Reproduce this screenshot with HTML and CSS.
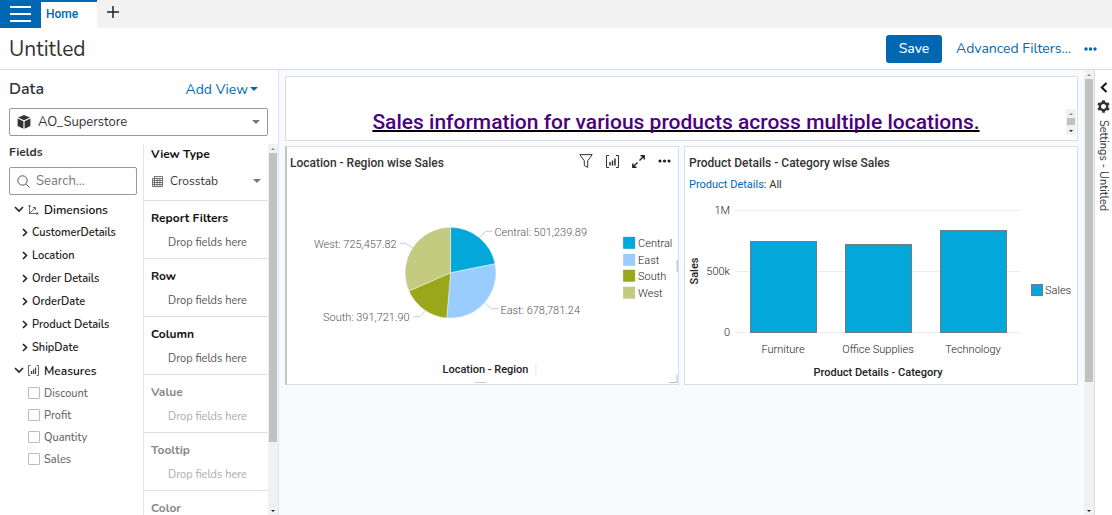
FILE: index.html
```html
<!DOCTYPE html>
<html lang="en">
<head>
    <meta charset="UTF-8">
    <meta name="viewport" content="width=device-width, initial-scale=1.0">
    <title>Untitled</title>
    <link rel="stylesheet" href="styles.css">
</head>
<body>
    <nav class="tabbar">
        <button class="menu-btn" aria-label="Menu"><span></span><span></span><span></span></button>
        <a class="tab" href="#">Home</a>
        <button class="new-tab" aria-label="New tab">
            <svg width="12" height="12" viewBox="0 0 12 12"><path d="M6 0v12M0 6h12" stroke="#222" stroke-width="1.5"/></svg>
        </button>
    </nav>

    <header class="header">
        <h1>Untitled</h1>
        <button class="save">Save</button>
        <a class="adv" href="#">Advanced Filters...</a>
        <button class="more" aria-label="More">
            <svg width="13" height="4" viewBox="0 0 13 4" fill="#0067b3"><circle cx="2" cy="2" r="1.7"/><circle cx="6.5" cy="2" r="1.7"/><circle cx="11" cy="2" r="1.7"/></svg>
        </button>
    </header>

    <div class="workspace">
        <aside class="data">
            <div class="data-head">
                <h2>Data</h2>
                <button class="add-view">Add View <i class="caret blue"></i></button>
            </div>
            <div class="dataset">
                <svg width="14" height="14" viewBox="0 0 14 14" fill="#333"><path d="M7 0l6 2.6-6 2.7-6-2.7zM.6 3.6l5.8 2.6v7.6L.6 11zM13.4 3.6L7.6 6.2v7.6l5.8-2.8z"/></svg>
                <select aria-label="Data set"><option>AO_Superstore</option></select>
                <i class="caret"></i>
            </div>
            <div class="columns">
                <section class="fields">
                    <h3>Fields</h3>
                    <div class="search">
                        <svg width="13" height="13" viewBox="0 0 13 13" fill="none" stroke="#555"><circle cx="5.5" cy="5.5" r="4.7"/><path d="M9 9l3.6 3.6"/></svg>
                        <input type="text" placeholder="Search..." aria-label="Search fields">
                    </div>
                    <ul class="tree">
                        <li class="group">
                            <svg width="10" height="7" viewBox="0 0 10 7" class="chev"><path d="M1 1l4 4 4-4"/></svg>
                            <svg width="11" height="11" viewBox="0 0 11 11" fill="none" stroke="#444"><path d="M1.5 1v8.5H10M1.5 9.5L7 4M0 2.5L1.5 1 3 2.5M8.5 8L10 9.5 8.5 11M4.8 3.5H7.5V6" stroke-width=".8"/></svg>
                            <b>Dimensions</b>
                        </li>
                        <li><svg width="6" height="9" viewBox="0 0 6 9" class="chev"><path d="M1 1l3.5 3.5L1 8"/></svg>CustomerDetails</li>
                        <li><svg width="6" height="9" viewBox="0 0 6 9" class="chev"><path d="M1 1l3.5 3.5L1 8"/></svg>Location</li>
                        <li><svg width="6" height="9" viewBox="0 0 6 9" class="chev"><path d="M1 1l3.5 3.5L1 8"/></svg>Order Details</li>
                        <li><svg width="6" height="9" viewBox="0 0 6 9" class="chev"><path d="M1 1l3.5 3.5L1 8"/></svg>OrderDate</li>
                        <li><svg width="6" height="9" viewBox="0 0 6 9" class="chev"><path d="M1 1l3.5 3.5L1 8"/></svg>Product Details</li>
                        <li><svg width="6" height="9" viewBox="0 0 6 9" class="chev"><path d="M1 1l3.5 3.5L1 8"/></svg>ShipDate</li>
                        <li class="group">
                            <svg width="10" height="7" viewBox="0 0 10 7" class="chev"><path d="M1 1l4 4 4-4"/></svg>
                            <svg width="11" height="11" viewBox="0 0 11 11" fill="none" stroke="#444"><path d="M2.5 .5h-2v10h2M8.5 .5h2v10h-2" stroke-width=".8"/><path d="M3.5 9V6M5.5 9V4.5M7.5 9V2.5" stroke-width="1.3"/></svg>
                            <b>Measures</b>
                        </li>
                        <li class="measure"><label><input type="checkbox">Discount</label></li>
                        <li class="measure"><label><input type="checkbox">Profit</label></li>
                        <li class="measure"><label><input type="checkbox">Quantity</label></li>
                        <li class="measure"><label><input type="checkbox">Sales</label></li>
                    </ul>
                </section>
                <section class="shelves">
                    <div class="shelf">
                        <h4>View Type</h4>
                        <div class="view-type">
                            <svg width="11" height="11" viewBox="0 0 11 11" fill="none" stroke="#555" stroke-width=".8"><path d="M2.5 .5h8v10h-10v-8h2zM2.5 .5v10M.5 4.5h10M.5 6.5h10M.5 8.5h10M5.2 2.5v8M7.9 2.5v8M2.5 2.5h8"/></svg>
                            <select aria-label="View type"><option>Crosstab</option></select>
                            <i class="caret"></i>
                        </div>
                    </div>
                    <div class="shelf"><h4>Report Filters</h4><p>Drop fields here</p></div>
                    <div class="shelf"><h4>Row</h4><p>Drop fields here</p></div>
                    <div class="shelf"><h4>Column</h4><p>Drop fields here</p></div>
                    <div class="shelf off"><h4>Value</h4><p>Drop fields here</p></div>
                    <div class="shelf off"><h4>Tooltip</h4><p>Drop fields here</p></div>
                    <div class="shelf off"><h4>Color</h4></div>
                </section>
                <div class="scrollbar"><i class="up"></i><div class="thumb side-thumb"></div><i class="down"></i></div>
            </div>
        </aside>

        <main class="board">
            <div class="cards">
                <div class="card banner">
                    <a href="#">Sales information for various products across multiple locations.</a>
                    <div class="scrollbar"><i class="up"></i><div class="thumb"></div><i class="down"></i></div>
                </div>

                <div class="card active">
                    <div class="card-head">
                        <h5>Location - Region wise Sales</h5>
                        <div class="tools">
                            <button aria-label="Filter"><svg width="14" height="14" viewBox="0 0 14 14" fill="none" stroke="#333"><path d="M.8 .6h12.4L8.7 6.8v6.6L5.3 11.5V6.8z"/></svg></button>
                            <button aria-label="Chart type"><svg width="13" height="13" viewBox="0 0 13 13" fill="none" stroke="#333"><path d="M3 .5H.5v12H3M10 .5h2.5v12H10"/><path d="M4 10.5V7M6.5 10.5V5.5M9 10.5V3.5" stroke-width="1.5"/></svg></button>
                            <button aria-label="Expand"><svg width="13" height="13" viewBox="0 0 13 13" fill="none" stroke="#222" stroke-width="1.4"><path d="M7.5 5.5L12 1M8.5 .8h3.7v3.7M5.5 7.5L1 12M.8 8.5v3.7h3.7"/></svg></button>
                            <button aria-label="More"><svg width="13" height="4" viewBox="0 0 13 4" fill="#222"><circle cx="2" cy="2" r="1.6"/><circle cx="6.5" cy="2" r="1.6"/><circle cx="11" cy="2" r="1.6"/></svg></button>
                        </div>
                    </div>
                    <svg class="chart" viewBox="0 0 392 206">
                        <g stroke="#fff" stroke-width=".4">
                            <path fill="#04a7da" d="M164 95V49.5A45.5 45.5 0 0 1 208.6 86z"/>
                            <path fill="#99ccff" d="M164 95L208.6 86A45.5 45.5 0 0 1 160.1 140.3z"/>
                            <path fill="#9aa71a" d="M164 95L160.1 140.3A45.5 45.5 0 0 1 122.3 113.3z"/>
                            <path fill="#c3cb80" d="M164 95L122.3 113.3A45.5 45.5 0 0 1 164 49.5z"/>
                        </g>
                        <path d="M193 60l6-6.5h7M198 125l7 6h7M139 133l-6 6h-6M126 70l-7-4.5h-6" fill="none" stroke="#ccc"/>
                        <g class="light">
                            <text x="208" y="58">Central: 501,239.89</text>
                            <text x="214" y="136">East: 678,781.24</text>
                            <text x="123" y="143" text-anchor="end">South: 391,721.90</text>
                            <text x="110" y="70" text-anchor="end">West: 725,457.82</text>
                        </g>
                        <rect x="337" y="59" width="12" height="12" fill="#04a7da"/>
                        <rect x="337" y="76" width="12" height="12" fill="#99ccff"/>
                        <rect x="337" y="92" width="12" height="12" fill="#9aa71a"/>
                        <rect x="337" y="109" width="12" height="12" fill="#c3cb80"/>
                        <g class="label">
                            <text x="352" y="69">Central</text>
                            <text x="352" y="86">East</text>
                            <text x="352" y="102">South</text>
                            <text x="352" y="119">West</text>
                        </g>
                        <text class="axis" x="199" y="196" text-anchor="middle">Location - Region</text>
                        <path d="M249.5 186v13" stroke="#e5e5e5"/>
                        <path d="M188 205.5h12M391.5 82v12" stroke="#ccc" stroke-width="2"/>
                        <path d="M391 197v8h-8" fill="none" stroke="#bbb"/>
                    </svg>
                </div>

                <div class="card">
                    <div class="card-head"><h5>Product Details - Category wise Sales</h5></div>
                    <div class="crumb"><a href="#">Product Details</a>: All</div>
                    <svg class="chart" viewBox="0 0 392 189">
                        <path d="M50 15.5h285M50 76.5h285M50 137.5h285" stroke="#ececec"/>
                        <g fill="#04a7da" stroke="#6f7d82">
                            <rect x="65.5" y="46.5" width="66" height="91"/>
                            <rect x="160.5" y="49.5" width="66" height="88"/>
                            <rect x="255.5" y="35.5" width="66" height="102"/>
                            <rect x="346.5" y="89.5" width="11" height="11"/>
                        </g>
                        <g class="label" text-anchor="end">
                            <text x="45" y="19">1M</text>
                            <text x="45" y="80">500k</text>
                            <text x="45" y="141">0</text>
                        </g>
                        <g class="label" text-anchor="middle">
                            <text x="98" y="158">Furniture</text>
                            <text x="193" y="158">Office Supplies</text>
                            <text x="288" y="158">Technology</text>
                        </g>
                        <text class="label" x="360" y="99">Sales</text>
                        <text class="axis" x="193" y="181" text-anchor="middle">Product Details - Category</text>
                        <text class="axis" transform="translate(13 76) rotate(-90)" text-anchor="middle">Sales</text>
                    </svg>
                </div>
            </div>
            <div class="scrollbar"><i class="up"></i><div class="thumb board-thumb"></div><i class="down"></i></div>
        </main>

        <aside class="settings">
            <button aria-label="Open settings"><svg width="8" height="11" viewBox="0 0 8 11" fill="none" stroke="#111" stroke-width="2"><path d="M6.5 1L1.8 5.5 6.5 10"/></svg></button>
            <svg width="13" height="13" viewBox="-7 -7 14 14"><circle r="4" fill="none" stroke="#333" stroke-width="2.6"/><path d="M0-6.8V-4M0 4v2.8M5.9-3.4L3.5-2M-3.5 2l-2.4 1.4M5.9 3.4L3.5 2M-3.5-2l-2.4-1.4" stroke="#333" stroke-width="3"/></svg>
            <span>Settings - Untitled</span>
        </aside>
    </div>
</body>
</html>
```

FILE: styles.css
```css
* {
    box-sizing: border-box;
}
body {
    margin: 0;
    height: 100vh;
    display: flex;
    flex-direction: column;
    overflow: hidden;
    font-family: Nunito, Lato, sans-serif;
    font-size: 13px;
    color: #333;
    background: #fff;
}
h1, h2, h3, h4, h5, p, ul {
    margin: 0;
    padding: 0;
}
button {
    border: 0;
    padding: 0;
    background: none;
    font-family: inherit;
    color: inherit;
    display: flex;
    align-items: center;
    justify-content: center;
}
a {
    color: #0067b3;
    text-decoration: none;
}
svg {
    flex: none;
}

/* top tabs */
.tabbar {
    flex: none;
    display: flex;
    height: 28px;
    background: #f2f2f2;
}
.menu-btn {
    width: 41px;
    flex-direction: column;
    gap: 5px;
    background: #0067b3;
}
.menu-btn span {
    width: 21px;
    height: 2px;
    background: #fff;
}
.tab {
    width: 56px;
    padding-left: 5px;
    border-top: 2px solid #0067b3;
    background: #fff;
    font-family: Roboto, sans-serif;
    font-size: 12px;
    font-weight: 500;
    line-height: 24px;
}
.new-tab {
    width: 32px;
    height: 24px;
}

/* report header */
.header {
    flex: none;
    display: flex;
    align-items: center;
    height: 42px;
    padding: 0 15px 0 9px;
    border-bottom: 1px solid #d5dbe8;
}
.header h1 {
    flex: 1;
    font-size: 21px;
    font-weight: 400;
}
.save {
    width: 56px;
    height: 28px;
    margin-right: 14px;
    border-radius: 3px;
    background: #0067b3;
    color: #fff;
    font-size: 14px;
    font-weight: 500;
}
.adv {
    margin-right: 13px;
    font-size: 14px;
}

.workspace {
    flex: 1;
    display: flex;
    min-height: 0;
}

/* data panel */
.data {
    flex: none;
    display: flex;
    flex-direction: column;
    width: 279px;
    border-right: 1px solid #dfe4ee;
}
.data-head {
    display: flex;
    justify-content: space-between;
    align-items: center;
    height: 38px;
    padding: 0 20px 0 9px;
}
.data-head h2 {
    font-size: 16px;
    font-weight: 600;
}
.add-view {
    gap: 2px;
    color: #0067b3;
    font-size: 14px;
}
.caret {
    border: 4px solid transparent;
    border-top: 4px solid #777;
    border-bottom: 0;
}
.caret.blue {
    border-top-color: #0067b3;
}
.dataset {
    display: flex;
    align-items: center;
    gap: 7px;
    height: 28px;
    margin: 0 10px 0 9px;
    padding: 0 7px;
    border: 1px solid #999;
    border-radius: 2px;
}
select {
    flex: 1;
    min-width: 0;
    border: 0;
    padding: 0;
    appearance: none;
    background: none;
    color: #333;
    font-family: inherit;
    font-size: 13px;
}
.columns {
    flex: 1;
    display: flex;
    min-height: 0;
    padding-top: 8px;
    overflow: hidden;
}
.fields {
    width: 143px;
    flex: none;
}
.fields h3 {
    padding-left: 9px;
    font-size: 12px;
    line-height: 16px;
}
.search {
    display: flex;
    align-items: center;
    gap: 6px;
    height: 28px;
    margin: 7px 6px 3px 9px;
    padding: 0 7px;
    border: 1px solid #999;
    border-radius: 2px;
}
.search input {
    flex: 1;
    min-width: 0;
    border: 0;
    padding: 0;
    font-family: inherit;
    font-size: 13px;
}
.search input::placeholder {
    color: #777;
}
.tree {
    list-style: none;
    color: #222;
}
.tree li {
    display: flex;
    align-items: center;
    gap: 4px;
    height: 23px;
    padding-left: 22px;
    font-size: 11px;
    font-weight: 600;
}
.tree .group {
    padding-left: 14px;
}
.tree b {
    margin-left: 1px;
    color: #111;
    font-size: 12px;
    font-weight: 600;
}
.tree .measure {
    height: 22px;
    padding-left: 28px;
    color: #666;
    font-weight: 500;
}
.measure label {
    display: flex;
    align-items: center;
    gap: 4px;
}
.measure input {
    width: 12px;
    height: 12px;
    margin: 0;
    appearance: none;
    border: 1px solid #bbb;
    border-radius: 1px;
}
.chev {
    fill: none;
    stroke: #222;
    stroke-width: 1.6;
}

.shelves {
    flex: 1;
    border-left: 1px solid #dfe4f2;
}
.shelf {
    height: 58px;
    padding: 9px 7px 0;
    border-bottom: 1px solid #d8e0ee;
}
.shelf:first-child {
    height: 57px;
    padding-top: 2px;
}
.shelf h4 {
    color: #111;
    font-size: 12px;
    line-height: 16px;
}
.shelf p {
    margin-top: 10px;
    padding-left: 17px;
    color: #555;
    font-size: 11px;
    line-height: 14px;
}
.off h4 {
    color: #888;
}
.off p {
    color: #aaa;
}
.view-type {
    display: flex;
    align-items: center;
    gap: 7px;
    height: 20px;
    margin-top: 9px;
    padding-left: 1px;
}
.view-type select {
    font-size: 12px;
}

.scrollbar {
    display: flex;
    flex-direction: column;
    align-items: center;
    width: 10px;
    flex: none;
    background: #f1f1f1;
}
.scrollbar .up,
.scrollbar .down {
    margin: 4px 0 3px;
    border: 2px solid transparent;
}
.scrollbar .up {
    border-top: 0;
    border-bottom-color: #888;
}
.scrollbar .down {
    margin-top: auto;
    border-bottom: 0;
    border-top-color: #222;
}
.thumb {
    width: 8px;
    height: 7px;
    background: #c1c1c1;
}
.side-thumb {
    height: 78%;
}
.board-thumb {
    height: 68%;
}

/* dashboard */
.board {
    flex: 1;
    display: flex;
    min-width: 0;
    background: #f9fafd;
}
.cards {
    flex: 1;
    display: grid;
    grid-template-columns: 1fr 1fr;
    gap: 5px;
    align-content: start;
    padding: 6px 6px 0;
    min-width: 0;
}
.card {
    min-width: 0;
    border: 1px solid #dadcdf;
    background: #fff;
    font-family: Roboto, sans-serif;
}
.active {
    border-left: 2px solid #c5c5c5;
}
.banner {
    grid-column: 1 / 3;
    display: flex;
    align-items: flex-end;
    justify-content: center;
    height: 65px;
    padding: 0 1px 5px 0;
}
.banner a {
    flex: 1;
    color: #4b0082;
    font-size: 21px;
    font-weight: 500;
    line-height: 26px;
    text-align: center;
    text-decoration: underline #000 2px;
    text-decoration-skip-ink: none;
}
.banner .scrollbar {
    height: 26px;
}
.card-head {
    display: flex;
    justify-content: space-between;
    align-items: center;
    height: 31px;
    padding: 0 7px 0 4px;
}
.active .card-head {
    padding-left: 3px;
}
.card-head h5 {
    font-size: 12px;
    font-weight: 500;
}
.tools {
    display: flex;
    gap: 13px;
    padding-bottom: 3px;
}
.crumb {
    height: 17px;
    padding-left: 4px;
    font-size: 11px;
    line-height: 14px;
}
.chart {
    display: block;
    width: 100%;
    font-size: 11px;
}
.light {
    fill: #555;
    font-weight: 300;
}
.label {
    fill: #222;
    font-weight: 300;
}
.axis {
    fill: #222;
    font-weight: 500;
}

/* collapsed settings */
.settings {
    flex: none;
    display: flex;
    flex-direction: column;
    align-items: center;
    gap: 7px;
    width: 18px;
    padding-top: 12px;
    border-left: 1px solid #d5dbe8;
}
.settings span {
    writing-mode: vertical-rl;
    font-size: 11px;
}
```
